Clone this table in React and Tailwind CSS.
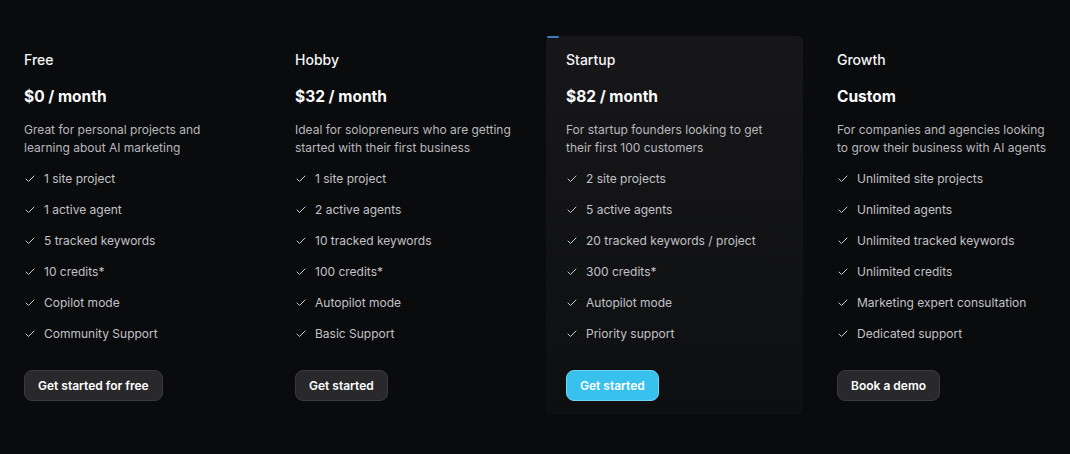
import { Check } from "lucide-react";

const plans = [
  {
    name: "Free",
    price: "$0 / month",
    description: ["Great for personal projects and", "learning about AI marketing"],
    features: [
      "1 site project",
      "1 active agent",
      "5 tracked keywords",
      "10 credits*",
      "Copilot mode",
      "Community Support",
    ],
    cta: "Get started for free",
  },
  {
    name: "Hobby",
    price: "$32 / month",
    description: ["Ideal for solopreneurs who are getting", "started with their first business"],
    features: [
      "1 site project",
      "2 active agents",
      "10 tracked keywords",
      "100 credits*",
      "Autopilot mode",
      "Basic Support",
    ],
    cta: "Get started",
  },
  {
    name: "Startup",
    price: "$82 / month",
    description: ["For startup founders looking to get", "their first 100 customers"],
    features: [
      "2 site projects",
      "5 active agents",
      "20 tracked keywords / project",
      "300 credits*",
      "Autopilot mode",
      "Priority support",
    ],
    cta: "Get started",
    highlighted: true,
  },
  {
    name: "Growth",
    price: "Custom",
    description: ["For companies and agencies looking", "to grow their business with AI agents"],
    features: [
      "Unlimited site projects",
      "Unlimited agents",
      "Unlimited tracked keywords",
      "Unlimited credits",
      "Marketing expert consultation",
      "Dedicated support",
    ],
    cta: "Book a demo",
  },
];

function PlanCard({ plan }) {
  const cardClassName = plan.highlighted
    ? "relative rounded-md bg-gradient-to-b from-[#17171a] to-[#0e0f11] px-5 pt-[14px] pb-[14px]"
    : "relative px-5 pt-[14px] pb-[14px]";

  return (
    <div className={cardClassName}>
      {plan.highlighted ? (
        <div className="absolute left-[1px] top-0 h-[2px] w-[12px] rounded-full bg-[#3c7db8]" />
      ) : null}

      <h3 className="text-[14px] leading-5 font-medium text-[#f4f4f5]">{plan.name}</h3>

      <p className="mt-[15px] text-[15.5px] leading-6 font-bold text-[#fafafa]">{plan.price}</p>

      <p className="mt-3 whitespace-nowrap text-[12px] leading-[18px] text-[#b8b8bd]">
        {plan.description[0]}
        <br />
        {plan.description[1]}
      </p>

      <ul className="mt-3 flex flex-col gap-[11px]">
        {plan.features.map((feature) => (
          <li
            key={feature}
            className="flex items-center gap-[8px] whitespace-nowrap text-[12px] leading-5 text-[#c2c2c7]"
          >
            <Check className="h-[12px] w-[12px] text-[#cdcdd1]" strokeWidth={2} />
            <span>{feature}</span>
          </li>
        ))}
      </ul>

      <button
        type="button"
        className={
          plan.highlighted
            ? "mt-[26px] inline-flex h-[31px] items-center rounded-lg border border-[#6fd6f5] bg-[#38c1ec] px-[13px] text-[12px] font-semibold text-white"
            : "mt-[26px] inline-flex h-[31px] items-center rounded-lg border border-[#3a3a3d] bg-[#29292b] px-[13px] text-[12px] font-semibold text-white"
        }
      >
        {plan.cta}
      </button>
    </div>
  );
}

export default function App() {
  return (
    <div
      className="h-[454px] w-[1070px] overflow-hidden bg-[#0a0b0d]"
      style={{ fontFamily: "Inter, 'Noto Sans', sans-serif" }}
    >
      <div className="grid w-[1074px] grid-cols-[257px_257px_257px_257px] items-start gap-[14px] pl-[4px] pt-[36px]">
        {plans.map((plan) => (
          <PlanCard key={plan.name} plan={plan} />
        ))}
      </div>
    </div>
  );
}
